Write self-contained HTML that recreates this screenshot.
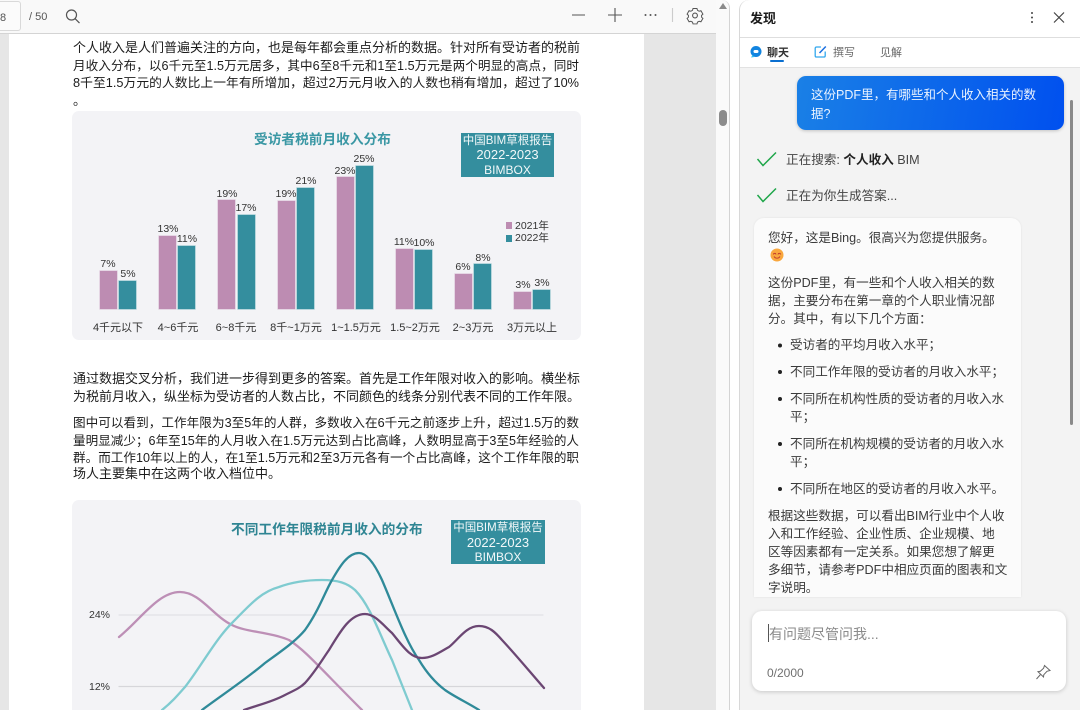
<!DOCTYPE html>
<html lang="zh"><head><meta charset="utf-8"><title>PDF</title>
<style>
html,body{margin:0;padding:0;width:1080px;height:710px;overflow:hidden;background:#fff}
body{position:relative;font-family:"Liberation Sans","Noto Sans CJK SC",sans-serif;color:#222}
.a{position:absolute}
.t{position:absolute;white-space:nowrap;font-size:13px;line-height:18px;height:18px;margin-top:1px}
.j{left:73px;width:506px;text-align:justify;text-align-last:justify;color:#1c1c1c}
.c{text-align:center}
.p{position:absolute;font-size:10.5px;line-height:12px;width:30px;text-align:center;color:#333;white-space:nowrap;margin-top:1px}
.l{position:absolute;font-size:11px;line-height:14px;width:70px;text-align:center;color:#333;white-space:nowrap;top:321px}
.b{position:absolute;bottom:401px;width:17px}
.pk{background:#bd8cb2;box-shadow:0 0 0 .6px #dcc3d8}
.tl{background:#348e9e;box-shadow:0 0 0 .6px #8fc3cc}
.m{color:#3a3a3a;left:768px;font-size:12.6px}
.s{font-size:12.6px}
.bx{position:absolute;background:#348e9e;color:#f2f8f9;font-size:11.5px;line-height:14px;text-align:center;white-space:nowrap}
.bx span{font-size:13px}
.bx i{font-style:normal;font-size:12px}
</style></head><body>

<!-- pdf area -->
<div class="a" style="left:0;top:33px;width:716px;height:677px;background:#e6e6e6"></div>
<div class="a" style="left:9px;top:33px;width:635px;height:677px;background:#fff"></div>

<!-- toolbar -->
<div class="a" style="left:0;top:0;width:716px;height:34px;background:#f9f9f9;border-bottom:1px solid #d4d4d4;box-sizing:border-box"></div>
<div class="a" style="left:-6px;top:1px;width:25px;height:28px;background:#fbfbfb;border:1px solid #d9d9d9;border-radius:3px"></div>
<div class="t" style="left:0;top:8px;font-size:11px;color:#555">8</div>
<div class="t" style="left:29px;top:7px;font-size:11px;color:#555">/ 50</div>
<svg class="a" style="left:64px;top:7px" width="18" height="18" viewBox="0 0 18 18" fill="none" stroke="#555" stroke-width="1.2"><circle cx="7.5" cy="8" r="5"/><path d="M11 11.6l4.5 4.5"/></svg>
<svg class="a" style="left:570px;top:6px" width="140" height="20" viewBox="0 0 140 20" fill="none" stroke="#555" stroke-width="1.1">
<path d="M2 9h13M38 9h14M45 2v14"/>
<circle cx="75.5" cy="9" r="1" fill="#555" stroke="none"/><circle cx="80.5" cy="9" r="1" fill="#555" stroke="none"/><circle cx="85.5" cy="9" r="1" fill="#555" stroke="none"/>
<path d="M102.500 2v14" stroke="#ccc"/>
<circle cx="125" cy="9.500" r="2.400"/>
<path d="M122.800 2.500h4.400l.6 2 1.800 1 2-.6 2.200 3.800-1.500 1.400v2l1.500 1.300-2.200 3.800-2-.6-1.800 1-.6 2h-4.400l-.6-2-1.800-1-2 .6-2.200-3.800 1.500-1.300v-2l-1.500-1.400 2.200-3.800 2 .6 1.800-1z" transform="translate(12.500 .3) scale(.9)"/>
</svg>

<!-- pdf scrollbar -->
<div class="a" style="left:716px;top:0;width:14px;height:710px;background:#fafafa;border-right:1px solid #d4d4d4;border-radius:0 8px 0 0;box-sizing:border-box"></div>
<div class="a" style="left:719px;top:110px;width:8px;height:16px;background:#8c8c8c;border-radius:4px"></div>
<svg class="a" style="left:718px;top:2px" width="10" height="8"><path d="M1 7L5 1l4 6z" fill="#8a8a8a"/></svg>

<!-- pdf text -->
<div class="t j" style="top:38px">个人收入是人们普遍关注的方向，也是每年都会重点分析的数据。针对所有受访者的税前</div>
<div class="t j" style="top:56px;font-size:12.6px">月收入分布，以6千元至1.5万元居多，其中6至8千元和1至1.5万元是两个明显的高点，同时</div>
<div class="t j" style="top:73px;font-size:12.75px">8千至1.5万元的人数比上一年有所增加，超过2万元月收入的人数也稍有增加，超过了10%</div>
<div class="t" style="left:73px;top:91px;color:#1c1c1c">。</div>

<!-- chart 1 -->
<div class="a" style="left:72px;top:111px;width:509px;height:229px;background:#f3f3f6;border-radius:7px"></div>
<div class="t" style="left:254px;top:130px;font-size:13.700px;font-weight:bold;color:#3a97a4">受访者税前月收入分布</div>
<div class="bx" style="left:461px;top:133px;width:93px;height:44px;padding-top:1px;box-sizing:border-box">中国BIM草根报告<br><span>2022-2023</span><br><i>BIMBOX</i></div>

<div class="b pk" style="left:100px;height:38px"></div><div class="b tl" style="left:119px;height:28px"></div>
<div class="b pk" style="left:159px;height:73px"></div><div class="b tl" style="left:178px;height:63px"></div>
<div class="b pk" style="left:218px;height:109px"></div><div class="b tl" style="left:238px;height:94px"></div>
<div class="b pk" style="left:278px;height:108px"></div><div class="b tl" style="left:297px;height:121px"></div>
<div class="b pk" style="left:337px;height:132px"></div><div class="b tl" style="left:356px;height:143px"></div>
<div class="b pk" style="left:396px;height:60px"></div><div class="b tl" style="left:415px;height:59px"></div>
<div class="b pk" style="left:455px;height:35px"></div><div class="b tl" style="left:474px;height:45px"></div>
<div class="b pk" style="left:514px;height:17px"></div><div class="b tl" style="left:533px;height:19px"></div>

<div class="p" style="left:93px;top:257px">7%</div><div class="p" style="left:113px;top:267px">5%</div>
<div class="p" style="left:153px;top:222px">13%</div><div class="p" style="left:172px;top:232px">11%</div>
<div class="p" style="left:212px;top:187px">19%</div><div class="p" style="left:231px;top:201px">17%</div>
<div class="p" style="left:271px;top:187px">19%</div><div class="p" style="left:291px;top:174px">21%</div>
<div class="p" style="left:330px;top:164px">23%</div><div class="p" style="left:349px;top:152px">25%</div>
<div class="p" style="left:389px;top:235px">11%</div><div class="p" style="left:409px;top:236px">10%</div>
<div class="p" style="left:448px;top:260px">6%</div><div class="p" style="left:468px;top:251px">8%</div>
<div class="p" style="left:508px;top:278px">3%</div><div class="p" style="left:527px;top:276px">3%</div>

<div class="l" style="left:83px">4千元以下</div>
<div class="l" style="left:143px">4~6千元</div>
<div class="l" style="left:201px">6~8千元</div>
<div class="l" style="left:261px">8千~1万元</div>
<div class="l" style="left:321px">1~1.5万元</div>
<div class="l" style="left:380px">1.5~2万元</div>
<div class="l" style="left:438px">2~3万元</div>
<div class="l" style="left:497px">3万元以上</div>

<div class="a" style="left:506px;top:222px;width:6px;height:7px;background:#bd8cb2"></div>
<div class="a" style="left:506px;top:235px;width:6px;height:7px;background:#348e9e"></div>
<div class="a" style="left:515px;top:220px;font-size:10.500px;line-height:13px;color:#333;white-space:nowrap">2021年</div>
<div class="a" style="left:515px;top:232px;font-size:10.500px;line-height:13px;color:#333;white-space:nowrap">2022年</div>

<div class="t j" style="top:369px">通过数据交叉分析，我们进一步得到更多的答案。首先是工作年限对收入的影响。横坐标</div>
<div class="t" style="left:73px;top:387px;color:#1c1c1c">为税前月收入，纵坐标为受访者的人数占比，不同颜色的线条分别代表不同的工作年限。</div>
<div class="t j" style="top:413px;font-size:12.6px">图中可以看到，工作年限为3至5年的人群，多数收入在6千元之前逐步上升，超过1.5万的数</div>
<div class="t j" style="top:431px;font-size:12.57px">量明显减少；6年至15年的人月收入在1.5万元达到占比高峰，人数明显高于3至5年经验的人</div>
<div class="t j" style="top:448px;font-size:12.57px">群。而工作10年以上的人，在1至1.5万元和2至3万元各有一个占比高峰，这个工作年限的职</div>
<div class="t" style="left:73px;top:464px;color:#1c1c1c">场人主要集中在这两个收入档位中。</div>

<!-- chart 2 -->
<div class="a" style="left:72px;top:500px;width:509px;height:210px;background:#f3f3f6;border-radius:7px 7px 0 0"></div>
<div class="t" style="left:231px;top:520px;font-size:13.700px;font-weight:bold;color:#2f8593">不同工作年限税前月收入的分布</div>
<div class="bx" style="left:451px;top:520px;width:94px;height:44px;line-height:13.500px;padding-top:2px;box-sizing:border-box">中国BIM草根报告<br><span>2022-2023</span><br><i>BIMBOX</i></div>
<div class="a" style="left:89px;top:609px;font-size:10.500px;line-height:12px;color:#333">24%</div>
<div class="a" style="left:89px;top:681px;font-size:10.500px;line-height:12px;color:#333">12%</div>
<svg class="a" style="left:0;top:500px" width="644" height="210" viewBox="0 500 644 210" fill="none" stroke-linecap="round">
<path d="M119 615H543" stroke="#e2e2e6" stroke-width="1.200"/>
<path d="M119 686.500H543" stroke="#d6d6da" stroke-width="1.200"/>
<path d="M119 637C140 620 158 592 180 592C200 592 213 616 232 625C245 632 270 632 289 640C305 650 320 668 362 710" stroke="#bd8fb6" stroke-width="2.300"/>
<path d="M162 710C172 702 178 695 185 687C200 668 215 640 232 623C248 607 260 592 279 587C295 581 310 580 322 580C338 580 347 583 355 590C370 605 380 635 392 660C400 680 406 695 412 710" stroke="#7fcbd0" stroke-width="2.300"/>
<path d="M202 710C222 695 245 680 265 663C280 652 295 642 305 630C318 612 325 592 332 580C340 566 348 553 359 553C368 553 376 567 382 580C395 610 405 640 419 660C428 675 437 684 445 690C455 697 468 703 479 710" stroke="#2f8a99" stroke-width="2.300"/>
<path d="M244 710C258 705 272 702 285 695C295 690 300 688 305 683C315 672 322 660 329 650C340 632 350 614 365 614C375 614 383 625 392 633C402 645 410 658 422 658C432 658 440 652 449 647C458 640 466 626 479 626C489 626 495 632 502 640C516 655 530 672 544 688" stroke="#6b4673" stroke-width="2.300"/>
</svg>

<!-- side panel -->
<div class="a" style="left:730px;top:0;width:9px;height:710px;background:#fff"></div>
<div class="a" style="left:739px;top:0;width:341px;height:710px;background:#f3f3f3;border-left:1px solid #d8d8d8;box-sizing:border-box;border-radius:10px 0 0 0"></div>
<div class="a" style="left:740px;top:0;width:340px;height:67px;background:#fff;border-bottom:1px solid #e2e2e2;border-radius:10px 0 0 0"></div>
<div class="a" style="left:740px;top:37px;width:340px;height:1px;background:#dedede"></div>
<div class="t" style="left:750px;top:9px;font-weight:bold;color:#1a1a1a">发现</div>
<svg class="a" style="left:1026px;top:9px" width="44" height="18" viewBox="0 0 44 18" fill="none" stroke="#444" stroke-width="1.200"><circle cx="6" cy="4" r="1" fill="#444" stroke="none"/><circle cx="6" cy="8.500" r="1" fill="#444" stroke="none"/><circle cx="6" cy="13" r="1" fill="#444" stroke="none"/><path d="M28 3.500l10 10M38 3.500l-10 10"/></svg>

<svg class="a" style="left:749px;top:45px" width="14" height="14" viewBox="0 0 14 14"><circle cx="7" cy="6.500" r="5.500" fill="#1184e0"/><path d="M2 12.500L3.500 10l2 2z" fill="#36c0f0"/><rect x="4.500" y="5" width="5" height="3" rx="1.500" fill="#fff"/></svg>
<div class="t" style="left:767px;top:43px;font-size:11px;font-weight:bold;color:#333">聊天</div>
<div class="a" style="left:770px;top:60px;width:14px;height:2px;background:#0a6fd0;border-radius:1px"></div>
<svg class="a" style="left:814px;top:45px" width="13" height="13" viewBox="0 0 13 13" fill="none"><path d="M7 2H2.500A1.300 1.300 0 0 0 1.200 3.300v7.400A1.300 1.300 0 0 0 2.500 12h7.400a1.300 1.300 0 0 0 1.300-1.300V6.500" stroke="#33a8ee" stroke-width="1.300"/><path d="M5.500 8L11.800 1.500" stroke="#1a6fe0" stroke-width="1.500"/></svg>
<div class="t" style="left:833px;top:43px;font-size:11px;color:#666">撰写</div>
<div class="t" style="left:880px;top:43px;font-size:11px;color:#666">见解</div>

<div class="a" style="left:797px;top:76px;width:267px;height:54px;border-radius:9px;background:linear-gradient(100deg,#1a80e6,#0050ef);box-shadow:0 1px 3px rgba(0,0,0,.2)"></div>
<div class="t" style="left:811px;top:85px;color:#eaf3ff;font-size:12.5px">这份PDF里，有哪些和个人收入相关的数</div>
<div class="t" style="left:811px;top:104px;color:#eaf3ff;font-size:12.5px">据?</div>
<div class="a" style="left:1070px;top:100px;width:3px;height:325px;background:#8a8a8a;border-radius:2px"></div>

<svg class="a" style="left:756px;top:150px" width="22" height="54" viewBox="0 0 22 54" fill="none" stroke="#1fa64a" stroke-width="1.500"><path d="M1.500 9l5.500 6.500L20 2.500M1.500 45l5.500 6.500L20 38.500"/></svg>
<div class="t s" style="left:786px;top:150px;color:#444">正在搜索: <b style="color:#222">个人收入</b> BIM</div>
<div class="t s" style="left:786px;top:186px;color:#444">正在为你生成答案...</div>

<!-- answer -->
<div class="a" style="left:754px;top:218px;width:267px;height:379px;background:#fbfbfb;border-radius:10px 10px 0 0;box-shadow:0 0 2px rgba(0,0,0,.08)"></div>
<div class="t m" style="top:228px">您好，这是Bing。很高兴为您提供服务。</div>
<svg class="a" style="left:770px;top:248px" width="14" height="14" viewBox="0 0 14 14" fill="none"><circle cx="7" cy="7" r="6.500" fill="#f9a73e"/><path d="M3.500 6.500a1.200 1.200 0 0 1 2.400 0M8.100 6.500a1.200 1.200 0 0 1 2.400 0M4 8.500c1.500 2.300 4.500 2.300 6 0" stroke="#c0392b" stroke-width=".9"/></svg>
<div class="t m" style="top:273px">这份PDF里，有一些和个人收入相关的数</div>
<div class="t m" style="top:291px">据，主要分布在第一章的个人职业情况部</div>
<div class="t m" style="top:309px">分。其中，有以下几个方面：</div>
<div class="t m" style="left:790px;top:335px">受访者的平均月收入水平；</div>
<div class="t m" style="left:790px;top:362px">不同工作年限的受访者的月收入水平；</div>
<div class="t m" style="left:790px;top:389px">不同所在机构性质的受访者的月收入水</div>
<div class="t m" style="left:790px;top:407px">平；</div>
<div class="t m" style="left:790px;top:434px">不同所在机构规模的受访者的月收入水</div>
<div class="t m" style="left:790px;top:452px">平；</div>
<div class="t m" style="left:790px;top:479px">不同所在地区的受访者的月收入水平。</div>
<svg class="a" style="left:776px;top:341px" width="8" height="155"><g fill="#222"><circle cx="4" cy="4.500" r="2"/><circle cx="4" cy="31" r="2"/><circle cx="4" cy="58" r="2"/><circle cx="4" cy="103" r="2"/><circle cx="4" cy="148" r="2"/></g></svg>
<div class="t m" style="top:506px">根据这些数据，可以看出BIM行业中个人收</div>
<div class="t m" style="top:524px">入和工作经验、企业性质、企业规模、地</div>
<div class="t m" style="top:542px">区等因素都有一定关系。如果您想了解更</div>
<div class="t m" style="top:560px">多细节，请参考PDF中相应页面的图表和文</div>
<div class="t m" style="top:578px">字说明。</div>

<!-- input -->
<div class="a" style="left:752px;top:611px;width:314px;height:80px;background:#fff;border-radius:10px;box-shadow:0 1px 4px rgba(0,0,0,.18)"></div>
<div class="a" style="left:768px;top:624px;width:1px;height:18px;background:#555"></div>
<div class="t" style="left:769px;top:624px;font-size:14px;color:#8a8a8a">有问题尽管问我...</div>
<div class="t" style="left:767px;top:663px;font-size:12px;color:#707070">0/2000</div>
<svg class="a" style="left:1034px;top:663px" width="18" height="18" viewBox="0 0 18 18" fill="none" stroke="#666" stroke-width="1"><path d="M10.500 2.500L16 7.500l-3 .8-3.200 3.400-.3 2.300-5.500-5.300 2.300-.4 3.300-3.100z"/><path d="M6.500 11.500L2.500 16"/></svg>

</body></html>
